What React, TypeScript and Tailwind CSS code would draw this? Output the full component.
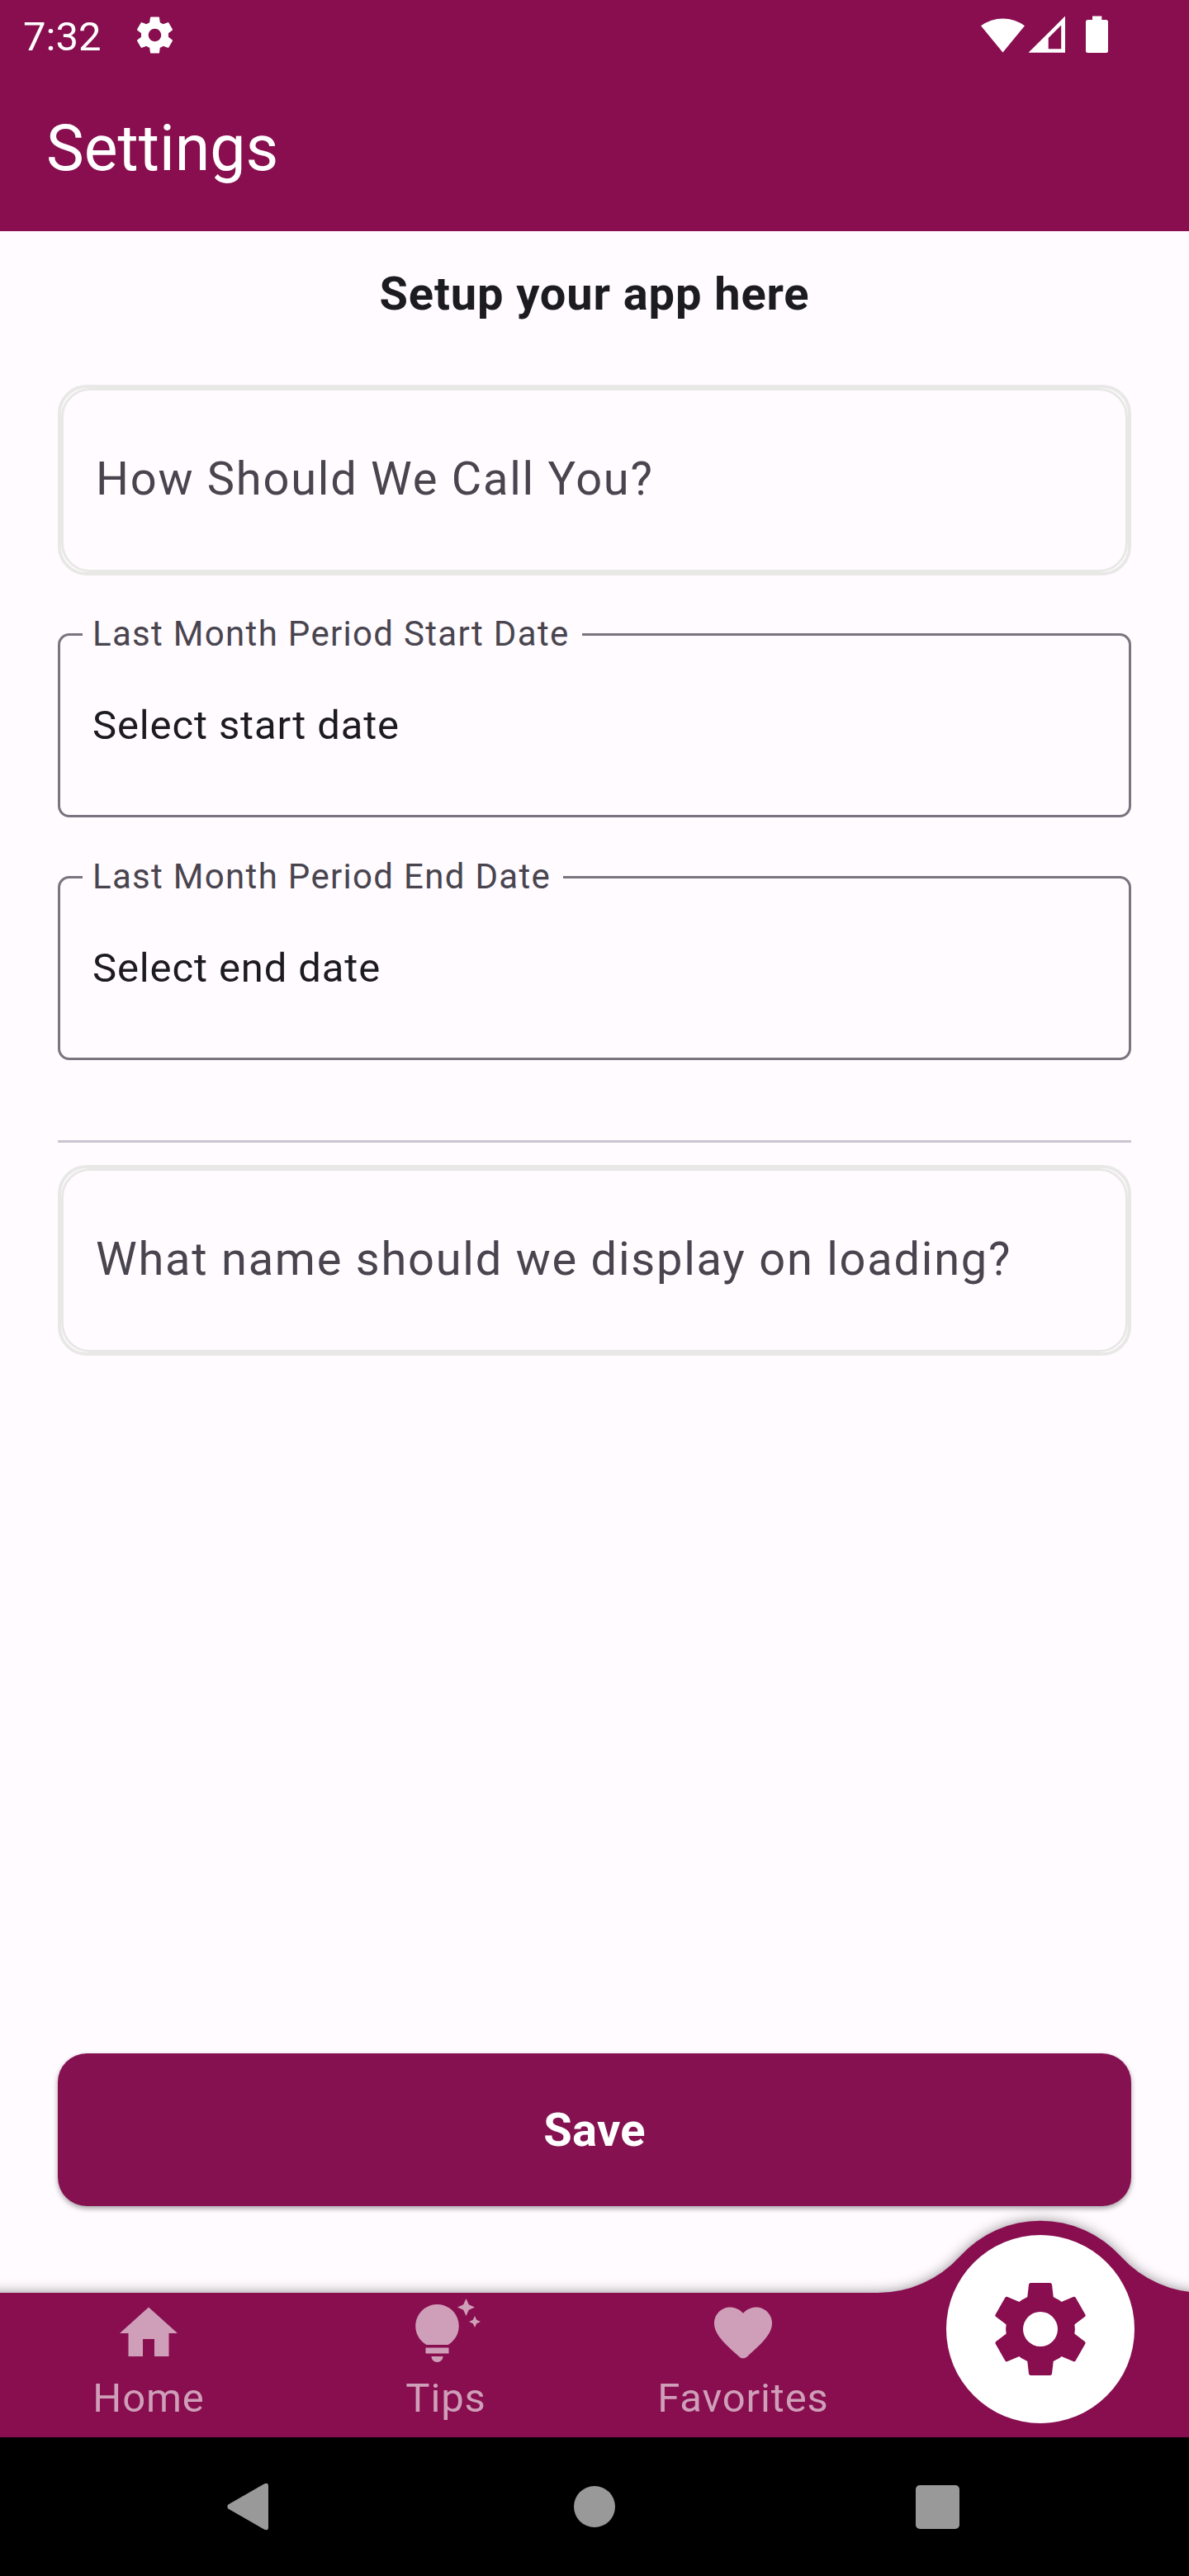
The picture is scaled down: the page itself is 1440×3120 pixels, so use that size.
import type { ReactNode } from "react";

function StatusGear() {
  return (
    <svg className="size-[53px]" viewBox="0 0 24 24" fill="currentColor">
      <path d="M19.43 12.98c.04-.32.07-.64.07-.98s-.03-.66-.07-.98l2.11-1.65c.19-.15.24-.42.12-.64l-2-3.46c-.12-.22-.39-.3-.61-.22l-2.49 1c-.52-.4-1.08-.73-1.69-.98l-.38-2.65C14.46 2.18 14.25 2 14 2h-4c-.25 0-.46.18-.49.42l-.38 2.65c-.61.25-1.17.59-1.69.98l-2.49-1c-.23-.09-.49 0-.61.22l-2 3.46c-.13.22-.07.49.12.64l2.11 1.65c-.04.32-.07.65-.07.98s.03.66.07.98l-2.11 1.65c-.19.15-.24.42-.12.64l2 3.46c.12.22.39.3.61.22l2.49-1c.52.4 1.08.73 1.69.98l.38 2.65c.03.24.24.42.49.42h4c.25 0 .46-.18.49-.42l.38-2.65c.61-.25 1.17-.59 1.69-.98l2.49 1c.23.09.49 0 .61-.22l2-3.46c.12-.22.07-.49-.12-.64l-2.11-1.65zM12 15.5c-1.93 0-3.5-1.57-3.5-3.5s1.57-3.5 3.5-3.5 3.5 1.57 3.5 3.5-1.57 3.5-3.5 3.5z" />
    </svg>
  );
}

function StatusIcons() {
  return (
    <svg className="h-[46px] w-[154px]" viewBox="0 0 154 46" fill="currentColor">
      {/* wifi */}
      <path d="M0 12.3A44 44 0 0 1 53 12.3L26.5 44.5Z" />
      {/* mobile signal */}
      <path fillRule="evenodd" d="M102 0.5V44.8H57.5ZM97.2 11.5L81.7 27V40.2H97.2Z" />
      {/* battery */}
      <path d="M135 0.4H146.3V5H151.5Q154 5 154 7.5V42.6Q154 45.1 151.5 45.1H129.5Q127 45.1 127 42.6V7.5Q127 5 129.5 5H135Z" />
    </svg>
  );
}

/* Gear with six straight-sided teeth around a disc */
function SettingsGear() {
  return (
    <svg className="h-[114px] w-[114px]" viewBox="-57 -57 114 114">
      <g fill="#880e4f">
        <circle r="41.9" />
        {[0, 60, 120, 180, 240, 300].map((angle) => (
          <path
            key={angle}
            transform={`rotate(${angle})`}
            d="M-15.8 -38.5L-14 -54Q-13.7 -56 -11.7 -56H11.7Q13.7 -56 14 -54L15.8 -38.5V-30H-15.8Z"
          />
        ))}
      </g>
      <circle r="21" fill="#fff" />
    </svg>
  );
}

function OutlinedInput({ children }: { children: ReactNode }) {
  return (
    <div className="h-[231px] rounded-[35px] border-[4px] border-[#e8e8e6]">
      <div className="h-full rounded-[35px] border-[3px] border-[#e8e8e6] pt-[79px] pl-[39px] text-[56px] leading-none tracking-[1.75px] text-[#49454f]">
        {children}
      </div>
    </div>
  );
}

function DateField({ label, value }: { label: string; value: string }) {
  return (
    <fieldset className="h-[244px] rounded-[14px] border-[3px] border-[#79747e] pl-[27px]">
      <legend className="h-[45px] pr-[15px] pl-[12px] text-[42px] leading-[43px] tracking-[1.3125px] text-[#49454f]">
        {label}
      </legend>
      <p className="pt-[63px] pl-[12px] text-[49px] leading-none tracking-[0.875px] text-[#1c1b1f]">{value}</p>
    </fieldset>
  );
}

function NavItem({ label, path }: { label: string; path: string }) {
  return (
    <div className="flex w-[360px] flex-col items-center pt-[7px] text-[#cf9fb9]">
      <svg className="size-[84px]" viewBox="0 0 24 24" fill="currentColor">
        <path d={path} />
      </svg>
      <span className="mt-[12px] text-[49px] leading-none tracking-[0.875px]">{label}</span>
    </div>
  );
}

export default function App() {
  return (
    <div className="flex h-[3120px] w-[1440px] flex-col overflow-hidden bg-[#fffbff] font-['Roboto',sans-serif]">
      <header className="flex h-[280px] flex-col bg-[#880e4f] text-white">
        <div className="flex h-[84px] items-start pt-[19px] pr-[98px] pl-[28px]">
          <span className="pt-px text-[49px] leading-none">7:32</span>
          <div className="-mt-[3px] ml-[39px]">
            <StatusGear />
          </div>
          <div className="ml-auto">
            <StatusIcons />
          </div>
        </div>
        <h1 className="pt-[58px] pl-[56px] text-[77px] leading-none">Settings</h1>
      </header>

      <main className="flex h-[2497px] flex-col px-[70px] pt-[48px] pb-[105px]">
        <h2 className="text-center text-[56px] leading-none font-bold tracking-[0.875px] text-[#1c1b1f]">
          Setup your app here
        </h2>
        <div className="mt-[82px]">
          <OutlinedInput>How Should We Call You?</OutlinedInput>
        </div>
        <div className="mt-[49px] flex flex-col gap-[50px]">
          <DateField label="Last Month Period Start Date" value="Select start date" />
          <DateField label="Last Month Period End Date" value="Select end date" />
        </div>
        <div className="mt-[97px] h-[3px] bg-[#cac4d0]" />
        <div className="mt-[27px]">
          <OutlinedInput>What name should we display on loading?</OutlinedInput>
        </div>
        <button className="mt-auto h-[185px] rounded-[35px] bg-[#851151] pt-[65px] pb-[64px] text-[56px] leading-none font-bold tracking-[0.35px] text-white shadow-[0_3px_6px_rgba(0,0,0,0.35)]">
          Save
        </button>
      </main>

      <nav className="relative flex h-[175px]">
        <svg
          className="absolute -top-[100px] left-0 h-[275px] w-[1440px] overflow-visible drop-shadow-[0_0_8px_rgba(0,0,0,0.42)]"
          viewBox="0 0 1440 275"
        >
          <path
            fill="#880e4f"
            d="M-60 100H1063A134 134 0 0 0 1162.4 56A131.5 131.5 0 0 1 1357.6 56A134 134 0 0 0 1457 100H1500V275H-60Z"
          />
        </svg>
        <div className="relative flex">
          <NavItem label="Home" path="M10 20v-6h4v6h5v-8h3L12 3 2 12h3v8z" />
          <NavItem
            label="Tips"
            path="M7 20h4c0 1.1-.9 2-2 2s-2-.9-2-2zm-2-1h8v-2H5v2zm11.5-9.5c0 3.82-2.66 5.86-3.77 6.5H5.27c-1.11-.64-3.77-2.68-3.77-6.5C1.5 5.36 4.86 2 9 2s7.5 3.36 7.5 7.5zm4.87-2.13L20 8l1.37.63L22 10l.63-1.37L24 8l-1.37-.63L22 6l-.63 1.37zM19 6l.94-2.06L22 3l-2.06-.94L19 0l-.94 2.06L16 3l2.06.94L19 6z"
          />
          <NavItem
            label="Favorites"
            path="M13.35 20.13c-.76.69-1.93.69-2.69-.01l-.11-.1C5.3 15.27 1.87 12.16 2 8.28c.06-1.7.93-3.33 2.34-4.29 2.64-1.8 5.9-.96 7.66 1.1 1.76-2.06 5.02-2.91 7.66-1.1 1.41.96 2.28 2.59 2.34 4.29.14 3.88-3.3 6.99-8.55 11.76l-.1.09z"
          />
          <div className="flex w-[360px] justify-center">
            <div className="-mt-[70px] flex size-[228px] items-center justify-center rounded-full bg-white">
              <SettingsGear />
            </div>
          </div>
        </div>
      </nav>

      <footer className="relative flex h-[168px] items-center bg-black pl-[275px] text-[#999]">
        <svg className="h-[58px] w-[51px]" viewBox="0 0 51 58" fill="currentColor">
          <path d="M1.3 26.6L44.8 1.5Q50 -0.8 50 4V54Q50 58.8 44.8 56.5L1.3 31.4Q-0.5 29 1.3 26.6Z" />
        </svg>
        <div className="ml-[369px] size-[50px] rounded-full bg-[#999]" />
        <div className="ml-[363.5px] size-[53px] rounded-[5px] bg-[#999]" />
      </footer>
    </div>
  );
}
